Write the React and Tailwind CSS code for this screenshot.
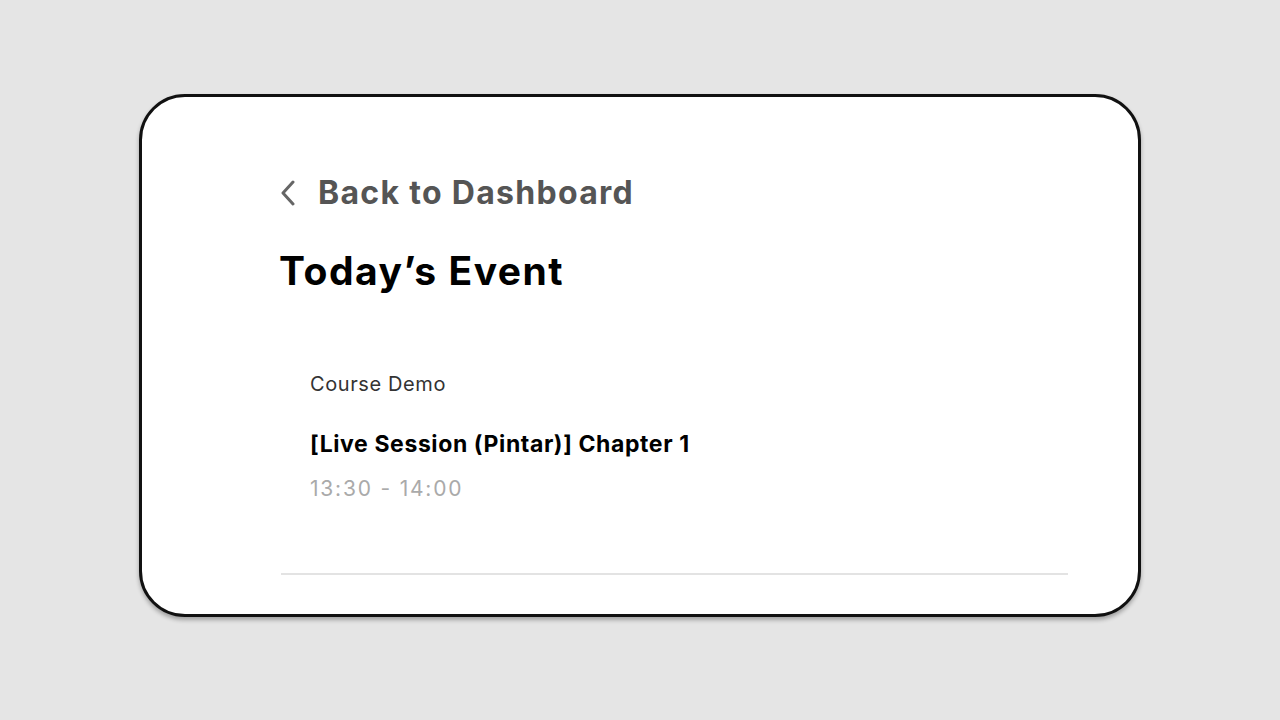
export default function App() {
  return (
    <div className="min-h-screen w-full bg-[#e5e5e5] flex items-start justify-center pt-[94px]" style={{ fontFamily: 'Inter, "Noto Sans", sans-serif' }}>
      <div className="w-[1002px] h-[523px] bg-white border-[3px] border-[#111] rounded-[46px] shadow-[0_3px_4px_rgba(0,0,0,0.3)] pl-[137px] pr-[70px] pt-[74px]">
        {/* Back */}
        <button className="flex items-center gap-[22px] text-[#555]">
          <svg width="16" height="26" viewBox="0 0 16 26" fill="none" className="ml-[1px]">
            <path d="M13 2 L3 13 L13 24" stroke="#666" strokeWidth="3" strokeLinecap="round" strokeLinejoin="round" />
          </svg>
          <span className="text-[32px] font-bold leading-[44px] tracking-[1.3px]">Back to Dashboard</span>
        </button>

        <h1 className="mt-[32px] text-[39px] font-bold text-black leading-[48px] tracking-[1.5px]">Today’s Event</h1>

        {/* Event */}
        <div className="mt-[75px] pl-[31px]">
          <p className="text-[20px] text-[#333] leading-[28px] tracking-[0.6px]">Course Demo</p>
          <p className="mt-[31px] text-[23px] font-bold text-black leading-[30px] tracking-[0.6px]">[Live Session (Pintar)] Chapter 1</p>
          <p className="mt-[16px] text-[21px] text-[#aaa] leading-[28px] tracking-[1.8px]">13:30 - 14:00</p>
        </div>

        <div className="mt-[70px] ml-[2px] h-[2px] bg-[#e3e3e3]" />
      </div>
    </div>
  );
}
